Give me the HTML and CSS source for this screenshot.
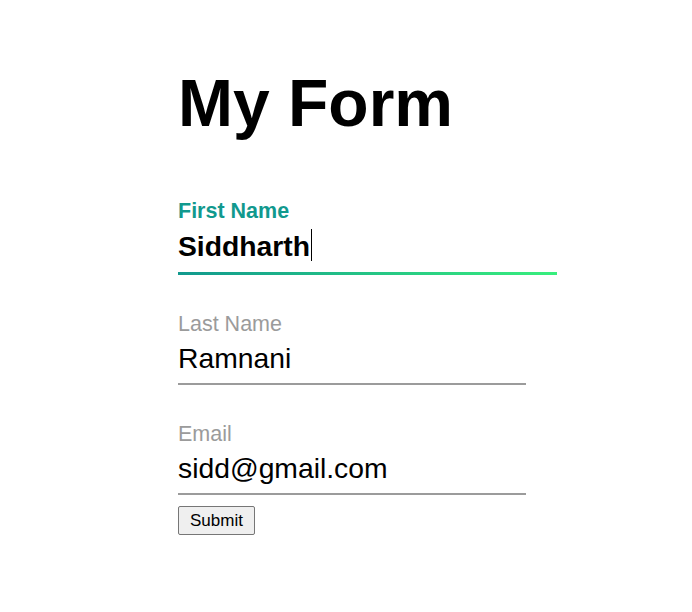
FILE: index.html
```html
<!DOCTYPE html>
<html lang="en">
<head>
<meta charset="utf-8">
<title>My Form</title>
<link rel="stylesheet" href="styles.css">
</head>
<body>
<main class="page">
  <h1 class="title">My Form</h1>
  <form class="form">
    <div class="form-group form-group--active">
      <label class="form-label" for="first">First Name</label>
      <span class="field-wrap">
        <input class="form-field form-field--active" id="first" type="text" value="Siddharth">
        <span class="caret" aria-hidden="true"></span>
      </span>
    </div>
    <div class="form-group">
      <label class="form-label" for="last">Last Name</label>
      <input class="form-field" id="last" type="text" value="Ramnani">
    </div>
    <div class="form-group">
      <label class="form-label" for="email">Email</label>
      <input class="form-field" id="email" type="email" value="sidd@gmail.com">
    </div>
    <button class="submit" type="submit">Submit</button>
  </form>
</main>
</body>
</html>
```

FILE: styles.css
```css
html, body {
  margin: 0;
  padding: 0;
  background: #ffffff;
}

body {
  font-family: "Liberation Sans", Arial, sans-serif;
  color: #000;
}

.page {
  padding: 65px 0 0 178px;
}

.title {
  margin: 0;
  font-size: 66px;
  line-height: 76px;
  font-weight: 700;
}

.form {
  display: flex;
  flex-direction: column;
  align-items: flex-start;
  margin-top: 58px;
}

.form-group {
  display: flex;
  flex-direction: column;
  align-items: flex-start;
}

.form-group + .form-group {
  margin-top: 36.5px;
}

.form-label {
  font-size: 21.5px;
  line-height: 25px;
  color: #9b9b9b;
}

.form-group--active .form-label {
  color: #11998e;
  font-weight: 700;
}

.field-wrap {
  position: relative;
  display: block;
}

.caret {
  position: absolute;
  left: 133px;
  top: 5px;
  width: 1px;
  height: 32px;
  background: #000;
}

.form-field {
  display: block;
  box-sizing: content-box;
  width: 348px;
  margin: 0;
  padding: 6px 0 8px;
  border: 0;
  border-bottom: 2px solid #9b9b9b;
  outline: 0;
  background: transparent;
  font-family: inherit;
  font-size: 28.3px;
  line-height: 32.5px;
  height: 32.5px;
  color: #000;
}

.form-field--active {
  width: 379px;
  font-weight: 700;
  padding-bottom: 9.5px;
  border-bottom-width: 3px;
  border-image: linear-gradient(to right, #11998e, #38ef7d);
  border-image-slice: 1;
}

.submit {
  margin-top: 10.5px;
  padding: 4px 11px;
  font-family: inherit;
  font-size: 17px;
  line-height: 19px;
  color: #000;
  background: #efefef;
  border: 1px solid #767676;
  border-radius: 2px;
}
```
